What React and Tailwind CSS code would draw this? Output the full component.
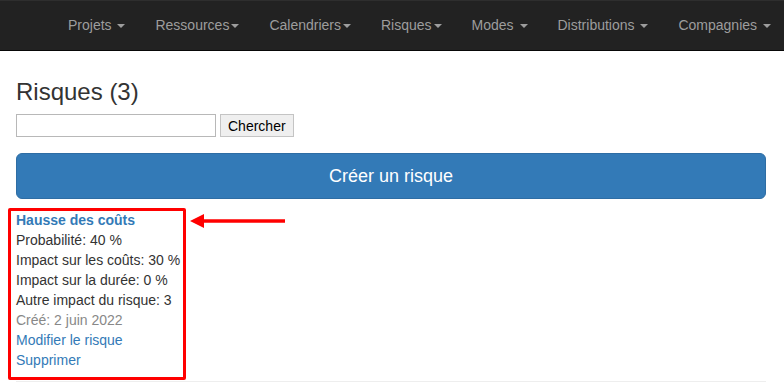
import React from "react";

const menus = [
    {label: "Projets", space: true},
    {label: "Ressources", space: false},
    {label: "Calendriers", space: false},
    {label: "Risques", space: false},
    {label: "Modes", space: true},
    {label: "Distributions", space: true},
    {label: "Compagnies", space: true},
];

function Caret() {
    return (
        <span className="inline-block ml-[2px] align-middle w-0 h-0 border-t-[4px] border-t-[#9d9d9d] border-x-[4px] border-x-transparent"/>
    );
}

export default function App() {
    return (
        <div className="w-[784px] h-[384px] bg-white overflow-hidden text-[14px] leading-[20px] text-[#333]"
             style={{fontFamily: '"Liberation Sans", Arial, sans-serif'}}>
            {/* Navbar */}
            <nav className="h-[51px] bg-[#222] border-t border-t-[#2e2e2e] border-b border-b-[#080808] flex">
                <ul className="flex ml-[53px]">
                    {menus.map((m) => (
                        <li key={m.label} className="px-[15px] py-[14px] text-[#9d9d9d] whitespace-pre">
                            {m.label}{m.space ? " " : ""}<Caret/>
                        </li>
                    ))}
                </ul>
            </nav>

            <div className="ml-4 w-[750px]">
                <h3 className="text-[24px] leading-[26px] mt-[28px] mb-[9px] font-normal">Risques (3)</h3>

                <form className="flex gap-[4px] items-center">
                    <input type="text"
                           className="w-[200px] h-[23px] border border-[#b8b8b8] bg-white px-1 outline-none"/>
                    <button type="button"
                            className="h-[23px] px-[7px] bg-[#efefef] border border-[#c4c4c4] text-[14px] text-black leading-[20px]">
                        Chercher
                    </button>
                </form>

                <button type="button"
                        className="mt-[16px] w-full h-[46px] bg-[#337ab7] border border-[#2e6da4] rounded-[6px] text-white text-[18px]">
                    Créer un risque
                </button>

                <div className="relative mt-[11px] pb-[11px] border-b border-[#eee]">
                    <a href="#" className="block font-bold text-[#337ab7]">Hausse des coûts</a>
                    <div>Probabilité: 40 %</div>
                    <div>Impact sur les coûts: 30 %</div>
                    <div>Impact sur la durée: 0 %</div>
                    <div>Autre impact du risque: 3</div>
                    <div className="text-[#888]">Créé: 2 juin 2022</div>
                    <a href="#" className="block text-[#337ab7]">Modifier le risque</a>
                    <a href="#" className="block text-[#337ab7]">Supprimer</a>

                    {/* Annotation overlay */}
                    <div className="absolute left-[-8px] top-[-2px] w-[178px] h-[172px] border-[3px] border-[#f00] rounded-[2px]"/>
                    <svg className="absolute left-[174px] top-[3px]" width="96" height="16" viewBox="0 0 96 16">
                        <line x1="10" y1="8" x2="95" y2="8" stroke="#f00" strokeWidth="3.5"/>
                        <polygon points="0,8 14,1 14,15" fill="#f00"/>
                    </svg>
                </div>
            </div>
        </div>
    );
}
